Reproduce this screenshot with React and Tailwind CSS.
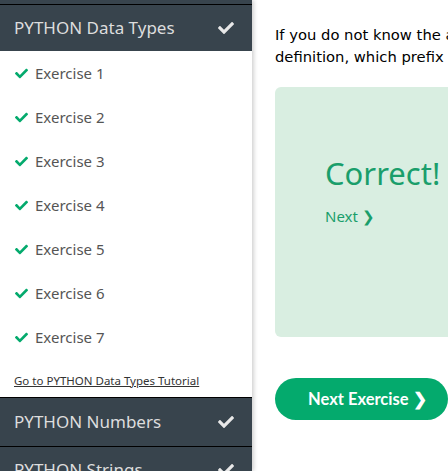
import { FaCheck } from 'react-icons/fa'

const exercises = [1, 2, 3, 4, 5, 6, 7]

function Header({ title, className = '' }) {
  return (
    <div
      className={`flex h-[47px] shrink-0 items-center justify-between border-t border-black bg-[#38444d] pl-[14px] pr-[18px] text-[17px] text-[#dddddd] ${className}`}
    >
      <span>{title}</span>
      <FaCheck className="h-[16px] w-[16px] text-[#e8e8e8]" />
    </div>
  )
}

export default function App() {
  return (
    <div className="flex h-[471px] w-[448px] overflow-hidden bg-white">
      <aside
        className="relative z-10 flex w-[252px] shrink-0 flex-col bg-white shadow-[2px_0_4px_rgba(0,0,0,0.18)]"
        style={{ fontFamily: '"Noto Sans", "Open Sans", sans-serif' }}
      >
        <div className="h-[4px] shrink-0 bg-[#38444d]" />
        <Header title="PYTHON Data Types" />
        <ul className="flex shrink-0 flex-col">
          {exercises.map((n) => (
            <li key={n} className="flex h-[44px] shrink-0 items-center pl-[15px] text-[15px] text-[#555555]">
              <FaCheck className="mr-[7px] h-[13px] w-[13px] text-[#04aa6d]" />
              Exercise {n}
            </li>
          ))}
        </ul>
        <a
          href="#"
          className="block h-[38px] shrink-0 pl-[14px] pt-[13px] text-[11.5px] text-[#333333] underline"
        >
          Go to PYTHON Data Types Tutorial
        </a>
        <Header title="PYTHON Numbers" className="h-[49px]" />
        <Header title="PYTHON Strings" />
      </aside>

      <main className="min-w-0 flex-1 overflow-hidden pl-[23px] pt-[24px]">
        <div className="w-[600px]">
          <p
            className="whitespace-nowrap text-[14.75px] leading-[22px] text-[#000000]"
            style={{ fontFamily: '"DejaVu Sans", Verdana, sans-serif' }}
          >
            If you do not know the answer, check the exercise text.
            <br />
            definition, which prefix makes the string a bytes value?
          </p>

          <div className="mt-[19px] flex h-[250px] flex-col rounded-[6px] bg-[#d9eee1] pl-[50px] pt-[66px]">
            <div
              className="text-[31px] leading-[40px] text-[#1a9e6b]"
              style={{ fontFamily: '"Noto Sans", "Open Sans", sans-serif' }}
            >
              Correct!
            </div>
            <a
              href="#"
              className="mt-[12px] text-[15px] text-[#1a9e6b]"
              style={{ fontFamily: '"Noto Sans", "Open Sans", sans-serif' }}
            >
              Next ❯
            </a>
          </div>

          <button
            className="mt-[41px] flex h-[42px] w-[173px] items-center rounded-full bg-[#04aa6d] pl-[33px] text-[16.5px] font-bold text-white"
            style={{ fontFamily: 'Lato, "Noto Sans", sans-serif' }}
          >
            Next Exercise ❯
          </button>
        </div>
      </main>
    </div>
  )
}
